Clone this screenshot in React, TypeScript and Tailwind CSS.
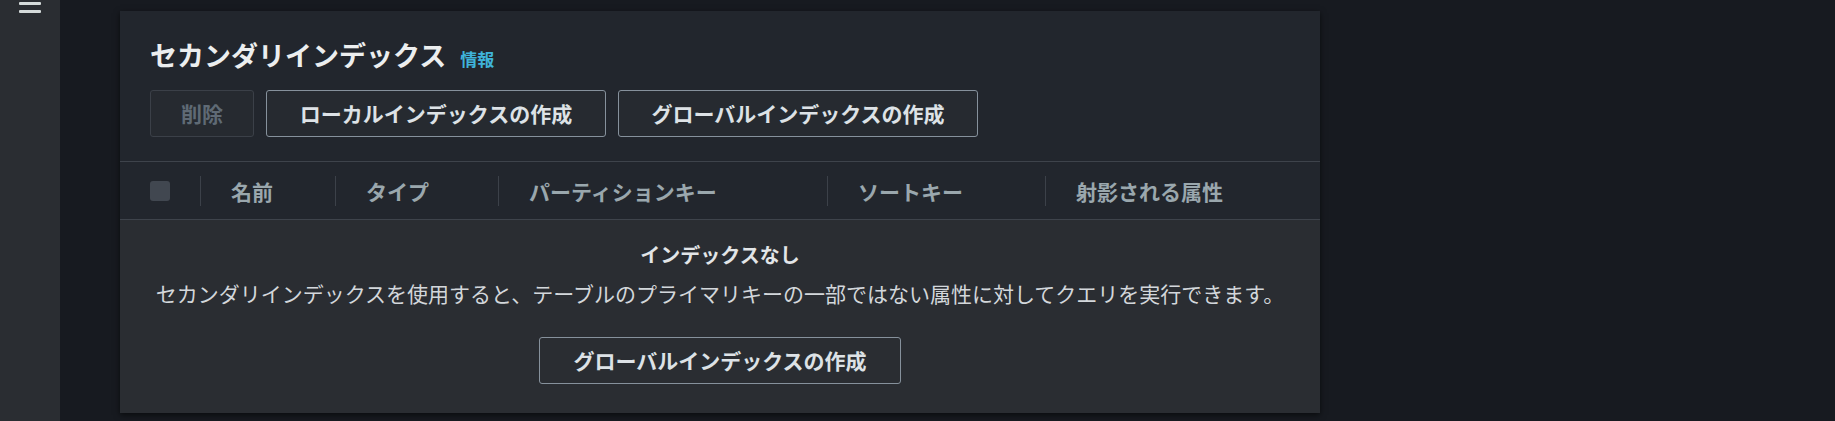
import React from "react";

const font = { fontFamily: '"Noto Sans CJK JP", "Noto Sans", sans-serif' };

const columns = [
  { label: "名前", w: "w-[135px]" },
  { label: "タイプ", w: "w-[163px]" },
  { label: "パーティションキー", w: "w-[329px]" },
  { label: "ソートキー", w: "w-[218px]" },
  { label: "射影される属性", w: "flex-1" },
];

export default function App() {
  return (
    <div
      className="flex h-[421px] w-[1835px] overflow-hidden bg-[#171a20]"
      style={font}
    >
      <aside className="relative h-full w-[60px] shrink-0 bg-[#2a2d32]">
        <div className="absolute left-[19px] top-[-6px] flex flex-col gap-[5px]">
          <span className="block h-[3px] w-[22px] rounded-[1px] bg-[#d5dbdb]" />
          <span className="block h-[3px] w-[22px] rounded-[1px] bg-[#d5dbdb]" />
          <span className="block h-[3px] w-[22px] rounded-[1px] bg-[#d5dbdb]" />
        </div>
      </aside>
      <main className="pl-[60px] pt-[11px]">
        <section className="flex h-[402px] w-[1200px] flex-col bg-[#22262d] shadow-[0_2px_6px_rgba(0,0,0,0.6)]">
          <div className="px-[30px] pt-[26px] pb-[24px]">
            <div className="flex items-baseline gap-[14px]">
              <h2 className="text-[27px] font-bold leading-[36px] text-[#eceeef]">
                セカンダリインデックス
              </h2>
              <span className="text-[17px] font-bold leading-[24px] text-[#3fb3da]">
                情報
              </span>
            </div>
            <div className="mt-[17px] flex gap-[12px]">
              <button className="h-[47px] w-[104px] rounded-[3px] border border-[#3b4048] bg-[#262a30] text-[21px] font-bold text-[#5f6a75]">
                削除
              </button>
              <button className="h-[47px] w-[340px] rounded-[3px] border border-[#86919c] bg-[#262a30] text-[21px] font-bold text-[#dde2e6]">
                ローカルインデックスの作成
              </button>
              <button className="h-[47px] w-[360px] rounded-[3px] border border-[#86919c] bg-[#262a30] text-[21px] font-bold text-[#dde2e6]">
                グローバルインデックスの作成
              </button>
            </div>
          </div>
          <div className="flex h-[59px] items-center border-y border-[#3e434b] bg-[#22262d]">
            <div className="flex w-[80px] items-center pl-[30px]">
              <span className="block h-[20px] w-[20px] rounded-[3px] bg-[#414750]" />
            </div>
            {columns.map((c) => (
              <div key={c.label} className={`flex items-center ${c.w}`}>
                <span className="block h-[30px] w-px bg-[#3c4149]" />
                <span className="ml-[30px] text-[21px] font-bold leading-[30px] text-[#9aa7ad]">
                  {c.label}
                </span>
              </div>
            ))}
          </div>
          <div className="flex flex-1 flex-col items-center bg-[#2a2d32] pt-[20px]">
            <h3 className="text-[20px] font-bold leading-[30px] text-[#e2e5e8]">
              インデックスなし
            </h3>
            <p className="mt-[8px] text-[21px] leading-[30px] text-[#d3d7db]">
              セカンダリインデックスを使用すると、テーブルのプライマリキーの一部ではない属性に対してクエリを実行できます。
            </p>
            <button className="mt-[29px] h-[47px] w-[362px] rounded-[3px] border border-[#86919c] bg-[#2a2d32] text-[21px] font-bold text-[#dde2e6]">
              グローバルインデックスの作成
            </button>
          </div>
        </section>
      </main>
    </div>
  );
}
